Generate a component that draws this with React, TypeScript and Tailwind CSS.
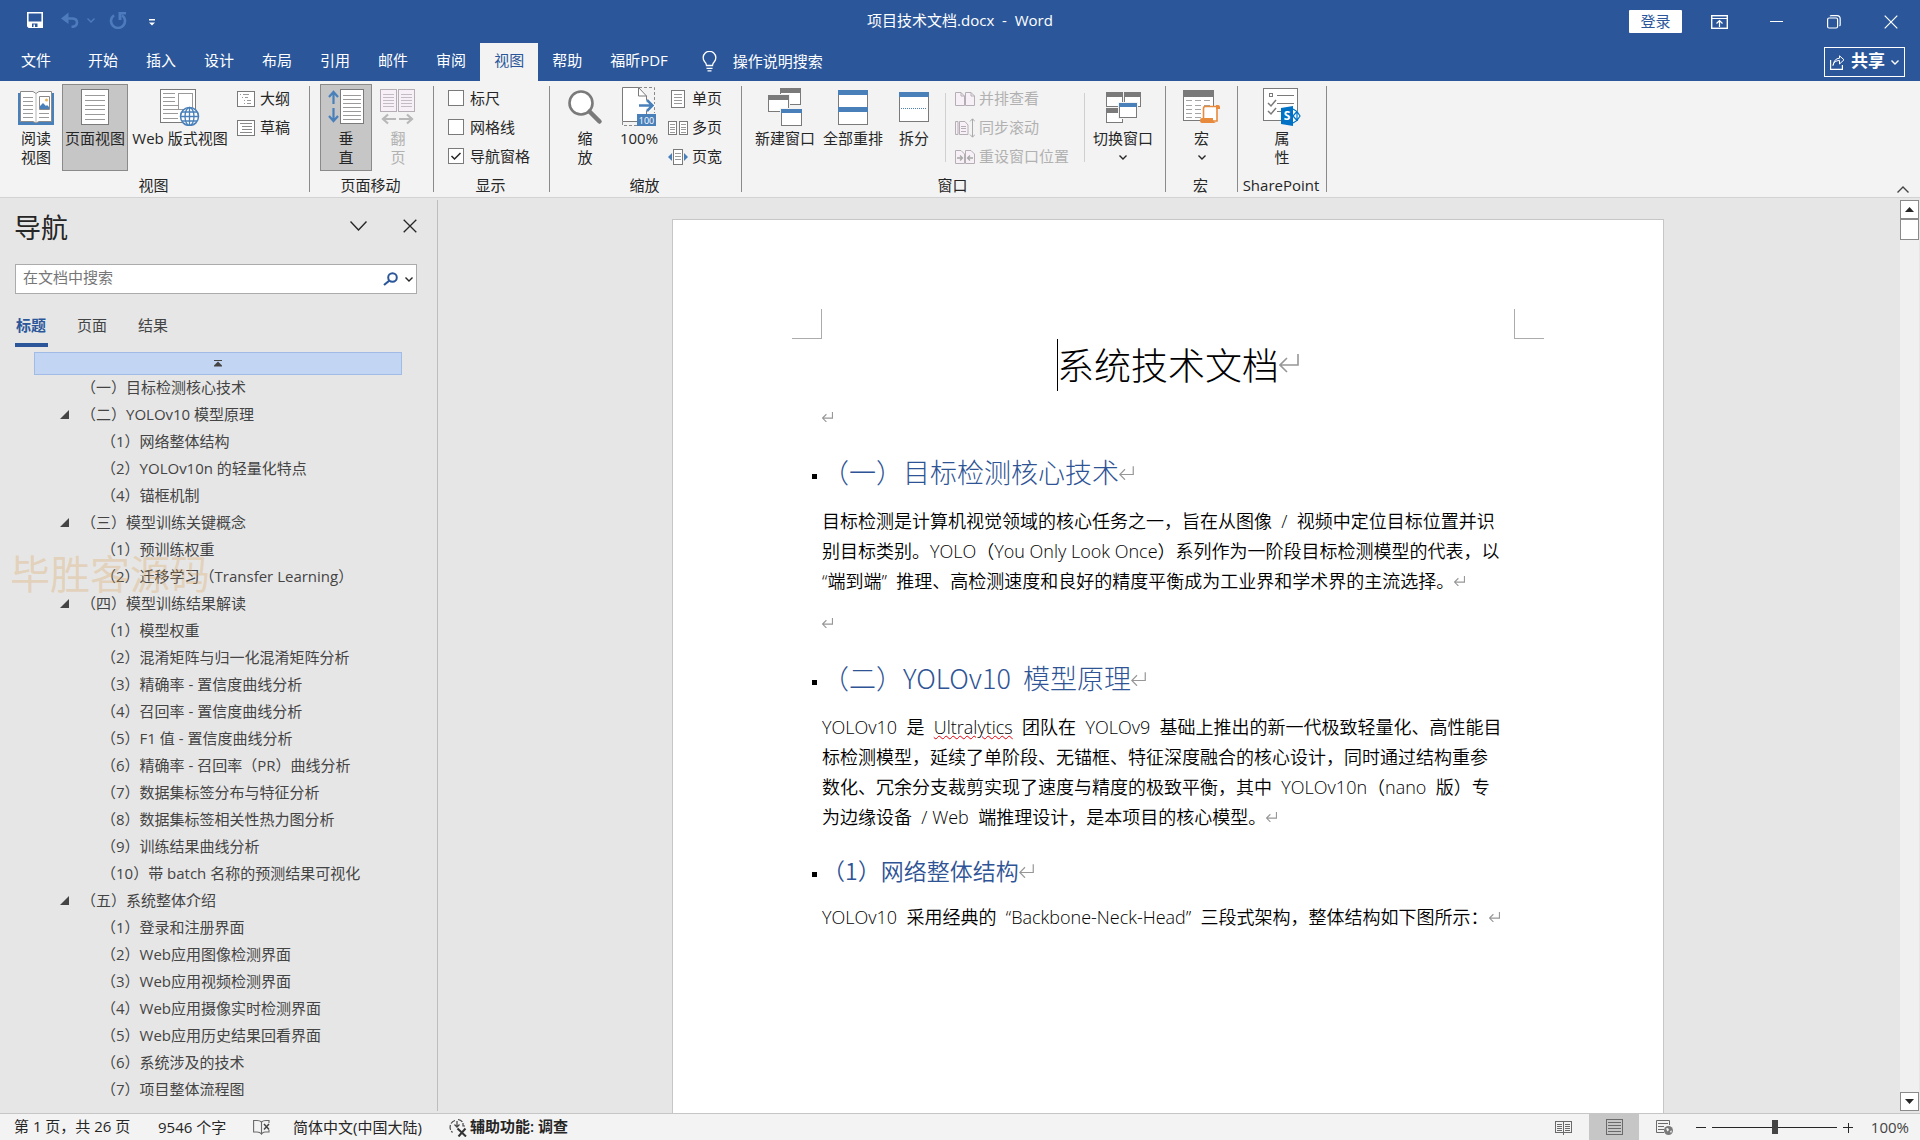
import type { ReactNode } from 'react';

const GREY = '#7a7a7a';
const BLUE = '#4a80ba';

/* ---------- helpers for line-art icons ---------- */

interface IconProps {
  w: number;
  h: number;
  crisp?: boolean;
  children: ReactNode;
}

function Icon({ w, h, crisp, children }: IconProps) {
  return (
    <svg width={w} height={h} viewBox={`0 0 ${w} ${h}`} fill="none" className="shrink-0" shapeRendering={crisp ? 'crispEdges' : 'auto'} aria-hidden="true">
      {children}
    </svg>
  );
}

function Lines({ x1, x2, ys, color = '#8a8a8a' }: { x1: number; x2: number; ys: number[]; color?: string }) {
  return (
    <>
      {ys.map((y) => (
        <path key={y} d={`M${x1} ${y + 0.5}H${x2}`} stroke={color} />
      ))}
    </>
  );
}

function Chevron({ w = 8, color = '#262626', flip = false }: { w?: number; color?: string; flip?: boolean }) {
  const h = Math.round(w / 2) + 1;
  return (
    <Icon w={w} h={h}>
      <path d={flip ? `M.5 ${h - 0.5}L${w / 2} 1L${w - 0.5} ${h - 0.5}` : `M.5 .5L${w / 2} ${h - 1}L${w - 0.5} .5`} stroke={color} strokeWidth="1.4" />
    </Icon>
  );
}

function ReturnMark({ size = 'sm' }: { size?: 'sm' | 'md' | 'lg' }) {
  const cls = {
    sm: 'mb-1 h-[10px] w-[11px]',
    md: 'mb-1.5 h-[14px] w-[15px]',
    lg: 'h-[20px] w-[20px]',
  }[size];
  return (
    <svg viewBox="0 0 20 18" fill="none" stroke="#979797" strokeWidth={size === 'sm' ? 2 : 1.6} className={`inline-block ${cls}`} aria-hidden="true">
      <path d="M19 0V11H2M8 4L1 11L8 18" />
    </svg>
  );
}

/* ---------- ribbon icons ---------- */

const ReadIcon = () => (
  <Icon w={38} h={36}>
    <path d="M1 4H4V33H18L19 34L20 33H34V4H37V36H1Z" fill={BLUE} />
    <path d="M3.500 2.500H16L19 4.500L22 2.500H34.500V32.500H22L19 34L16 32.500H3.500Z" fill="#fff" stroke="#8a8a8a" />
    <path d="M19 4V33" stroke="#b5b5b5" />
    <Lines x1={6} x2={16} ys={[8, 12, 16, 20, 24, 28]} color="#9a9a9a" />
    <Lines x1={22} x2={32} ys={[24, 28]} color="#9a9a9a" />
    <path d="M22.500 7.500H32.500V20.500H22.500Z" fill="#fff" stroke="#8a8a8a" />
    <path d="M23 20V17L26 14L29 17L30 16L32 18V20Z" fill={BLUE} />
    <circle cx="29.500" cy="11" r="1.500" fill="#e8b45c" />
  </Icon>
);

const PageIcon = () => (
  <Icon w={28} h={36} crisp>
    <rect x=".5" y=".5" width="27" height="35" fill="#fff" stroke={GREY} />
    <Lines x1={4} x2={24} ys={[6, 11, 16, 20, 25, 30]} color="#9a9a9a" />
  </Icon>
);

const WebIcon = () => (
  <Icon w={40} h={38}>
    <rect x=".5" y="1.500" width="35" height="33" fill="#fff" stroke={GREY} />
    <Lines x1={3} x2={15} ys={[5, 9, 13]} color="#9a9a9a" />
    <Lines x1={3} x2={18} ys={[17, 21, 25, 30]} color="#9a9a9a" />
    <rect x="18.500" y="5.500" width="14" height="16" fill="#fff" stroke="#9a9a9a" />
    <circle cx="29.500" cy="28.500" r="9" fill="#fff" stroke={BLUE} strokeWidth="1.500" />
    <ellipse cx="29.500" cy="28.500" rx="4.500" ry="9" stroke={BLUE} strokeWidth="1.300" />
    <path d="M29.500 19.500V37.500M20.500 28.500H38.500M22 24H37M22 33H37" stroke={BLUE} strokeWidth="1.300" />
  </Icon>
);

const OutlineIcon = () => (
  <Icon w={18} h={16} crisp>
    <rect x=".5" y=".5" width="17" height="15" fill="#fff" stroke={GREY} />
    <path d="M3 3.500H4M6 3.500H12M5 6.500H6M8 6.500H11M7 9.500H8M10 9.500H14M7 12.500H8M10 12.500H14" stroke="#9a9a9a" />
  </Icon>
);

const DraftIcon = () => (
  <Icon w={18} h={16} crisp>
    <rect x=".5" y=".5" width="17" height="15" fill="#fff" stroke={GREY} />
    <Lines x1={3} x2={15} ys={[3, 12]} color="#8a8a8a" />
    <Lines x1={5} x2={15} ys={[6, 9]} color="#8a8a8a" />
  </Icon>
);

const VerticalIcon = () => (
  <Icon w={36} h={36}>
    <path d="M5.500 3V15M1 8L5.500 3L10 8M5.500 19V32M1 27L5.500 32L10 27" stroke={BLUE} strokeWidth="2.200" />
    <rect x="12.500" y=".5" width="23" height="34" fill="#fff" stroke={GREY} />
    <Lines x1={15} x2={33} ys={[6, 10, 14, 18, 22, 26, 30]} color="#9a9a9a" />
  </Icon>
);

const FlipIcon = () => (
  <Icon w={36} h={36}>
    <rect x=".5" y=".5" width="16" height="22" fill="#f7f1f7" stroke="#b5aeb5" />
    <rect x="18.500" y=".5" width="16" height="22" fill="#f7f1f7" stroke="#b5aeb5" />
    <Lines x1={3} x2={14} ys={[5, 8, 11, 14, 17]} color="#c4bcc4" />
    <Lines x1={21} x2={32} ys={[5, 8, 11, 14, 17]} color="#c4bcc4" />
    <path d="M3 30H16M8 25.500L3 30L8 34.500M19 30H32M27 25.500L32 30L27 34.500" stroke="#b8b8b8" strokeWidth="2.200" />
  </Icon>
);

const ZoomIcon = () => (
  <Icon w={36} h={36}>
    <circle cx="14" cy="14" r="11.500" fill="#fff" stroke={GREY} strokeWidth="2.600" />
    <path d="M22.500 22.500L32.500 32.500" stroke={GREY} strokeWidth="4.500" strokeLinecap="round" />
  </Icon>
);

const HundredIcon = () => (
  <Icon w={34} h={40}>
    <path d="M17 .5H32.500V26M.5 35V38.500H15" stroke="#8a8a8a" strokeDasharray="3 2" />
    <path d="M.5 .5H16.500L24.500 9V34.500H.5Z" fill="#fff" stroke={GREY} />
    <path d="M16.500 .5V9H24.500" stroke={GREY} />
    <path d="M17 18.500H30M25 13L30.500 18.500L25 24" stroke="#fff" strokeWidth="5" />
    <path d="M17 18.500H30M25 13L30.500 18.500L25 24" stroke={BLUE} strokeWidth="2.500" />
    <rect x="15" y="27" width="19" height="12" fill={BLUE} />
    <text x="24.500" y="36.500" textAnchor="middle" fontSize="9" fill="#fff">100</text>
  </Icon>
);

const OnePageIcon = () => (
  <Icon w={14} h={18} crisp>
    <rect x=".5" y=".5" width="13" height="17" fill="#fff" stroke={GREY} />
    <Lines x1={3} x2={11} ys={[4, 7, 10, 13]} color="#9a9a9a" />
  </Icon>
);

const MultiPageIcon = () => (
  <Icon w={20} h={14} crisp>
    <rect x=".5" y=".5" width="8" height="13" fill="#fff" stroke={GREY} />
    <rect x="11.500" y=".5" width="8" height="13" fill="#fff" stroke={GREY} />
    <Lines x1={2} x2={7} ys={[3, 6, 8, 11]} color="#9a9a9a" />
    <Lines x1={13} x2={18} ys={[3, 6, 8, 11]} color="#9a9a9a" />
  </Icon>
);

const PageWidthIcon = () => (
  <Icon w={20} h={16}>
    <rect x="5.500" y=".5" width="9" height="15" fill="#fff" stroke={GREY} />
    <Lines x1={7} x2={13} ys={[4, 7, 10]} color="#9a9a9a" />
    <path d="M0 8L4 4V12ZM20 8L16 4V12Z" fill={BLUE} />
  </Icon>
);

function MiniWindow({ x, y, w, h, color }: { x: number; y: number; w: number; h: number; color: string }) {
  return (
    <>
      <rect x={x - 1} y={y - 1} width={w + 2} height={h + 2} fill="#f3f3f3" />
      <rect x={x + 0.5} y={y + 0.5} width={w - 1} height={h - 1} fill="#fff" stroke={GREY} />
      <rect x={x} y={y} width={w} height={color === BLUE ? 4 : 5} fill={color} />
    </>
  );
}

const NewWindowIcon = () => (
  <Icon w={36} h={38} crisp>
    <MiniWindow x={13} y={0} w={21} h={17} color={GREY} />
    <MiniWindow x={1} y={7} w={21} h={17} color={GREY} />
    <MiniWindow x={14} y={21} w={21} h={17} color={BLUE} />
  </Icon>
);

const ArrangeIcon = () => (
  <Icon w={30} h={35} crisp>
    <rect x=".5" y=".5" width="29" height="34" fill="#fff" stroke={GREY} />
    <rect width="30" height="5" fill={BLUE} />
    <rect y="17" width="30" height="5" fill={BLUE} />
  </Icon>
);

const SplitIcon = () => (
  <Icon w={30} h={30} crisp>
    <rect x=".5" y=".5" width="29" height="29" fill="#fff" stroke={GREY} />
    <rect width="30" height="5" fill={BLUE} />
    <path d="M2 16.500H28" stroke={BLUE} strokeDasharray="1 1" />
  </Icon>
);

const SideBySideIcon = () => (
  <Icon w={20} h={14}>
    <path d="M.5 .5H6L9.500 4V13.500H.5ZM6 .5V4H9.500M10.500 .5H16L19.500 4V13.500H10.500ZM16 .5V4H19.500" fill="#f7f1f7" stroke="#b5aeb5" />
  </Icon>
);

const SyncScrollIcon = () => (
  <Icon w={20} h={20}>
    <path d="M.5 3.500H3V16.500H.5ZM4.500 3.500H10L13 7V16.500H4.500Z" fill="#f7f1f7" stroke="#b5aeb5" />
    <Lines x1={6} x2={11} ys={[8, 10, 13]} color="#b5aeb5" />
    <path d="M17.500 1V19M15 3.500L17.500 .8L20 3.500M15 16.500L17.500 19.200L20 16.500" stroke="#aaa" />
  </Icon>
);

const ResetWindowIcon = () => (
  <Icon w={20} h={14}>
    <path d="M.5 .5H6L9.500 4V13.500H.5ZM10.500 .5H16L19.500 4V13.500H10.500Z" fill="#f7f1f7" stroke="#b5aeb5" />
    <path d="M2 8H7.500M5 5.500L7.500 8L5 10.500M18 8H12.500M15 5.500L12.500 8L15 10.500" stroke="#a8a8a8" strokeWidth="1.300" />
  </Icon>
);

const SwitchIcon = () => (
  <Icon w={35} h={31} crisp>
    <MiniWindow x={0} y={0} w={17} h={15} color={GREY} />
    <MiniWindow x={18} y={0} w={17} h={15} color={GREY} />
    <MiniWindow x={0} y={16} w={17} h={15} color={GREY} />
    <MiniWindow x={13} y={11} w={18} h={15} color={BLUE} />
  </Icon>
);

const MacroIcon = () => (
  <Icon w={37} h={34}>
    <rect x=".5" y=".5" width="30" height="30" fill="#fff" stroke={GREY} />
    <rect width="31" height="7" fill={GREY} />
    {[10, 15, 19, 23, 27].map((y) => (
      <path key={y} d={`M3 ${y + 0.5}H9M12 ${y + 0.5}H18M21 ${y + 0.5}H27`} stroke="#a5a5a5" />
    ))}
    <path d="M22 16.500H34V31H20.500V19Q20.500 16.500 22 16.500Z" fill="#fff" stroke="#e88a3c" strokeWidth="1.600" />
    <path d="M33 15H35Q37 15 37 17V19H33ZM17 30Q17 28 19 28H30V30Q31 33 33 33H19Q17 33 17 31Z" fill="#e88a3c" />
  </Icon>
);

const PropertiesIcon = () => (
  <Icon w={38} h={38}>
    <rect x=".5" y=".5" width="34" height="32" fill="#fff" stroke={GREY} />
    <rect x="6.500" y="5.500" width="3" height="3" stroke={GREY} />
    <path d="M14 7.500H31M14 15.500H31M14 23.500H19" stroke={GREY} />
    <path d="M5 15L8 18L13 12M5 23L8 26L13 20" stroke={GREY} strokeWidth="1.500" />
    <path d="M24 18L32 20L37.500 28L32 35L24 37Z" fill="#fff" />
    <path d="M30 21L34 23.500V32.500L30 35M34 23.500L37 28L34 32.500M30 28L34 23.500M30 28L34 32.500" stroke="#0072c6" strokeWidth="1.200" />
    <path d="M18 20L30 18V38L18 36Z" fill="#0072c6" />
    <text x="24" y="32" textAnchor="middle" fontSize="12" fontWeight="700" fill="#fff">S</text>
  </Icon>
);

/* ---------- ribbon building blocks ---------- */

interface BigButtonProps {
  icon: ReactNode;
  label: string[];
  width: string;
  active?: boolean;
  disabled?: boolean;
  menu?: boolean;
}

function BigButton({ icon, label, width, active, disabled, menu }: BigButtonProps) {
  return (
    <button
      type="button"
      disabled={disabled}
      className={`flex h-[87px] shrink-0 flex-col items-center border pt-0.5 leading-[19px] whitespace-nowrap ${width} ${
        active ? 'border-[#8a8a8a] bg-[#c6c6c6]' : 'border-transparent'
      } ${disabled ? 'text-[#b1b1b1]' : 'text-[#262626]'}`}
    >
      <span className="flex h-[42px] shrink-0 items-center justify-center pb-0.5">{icon}</span>
      {label.map((l) => (
        <span key={l}>{l}</span>
      ))}
      {menu && (
        <span className="flex h-[19px] items-center">
          <Chevron />
        </span>
      )}
    </button>
  );
}

function SmallButton({ icon, label, disabled }: { icon: ReactNode; label: string; disabled?: boolean }) {
  return (
    <button type="button" disabled={disabled} className={`flex h-[29px] items-center gap-1 whitespace-nowrap ${disabled ? 'text-[#b1b1b1]' : 'text-[#262626]'}`}>
      <span className="flex w-5 justify-center">{icon}</span>
      <span className="pb-0.5">{label}</span>
    </button>
  );
}

function Check({ label, checked }: { label: string; checked?: boolean }) {
  return (
    <label className="flex h-[29px] items-center gap-1.5 pb-0.5 whitespace-nowrap">
      <span className="relative flex h-4 w-4">
        <input type="checkbox" defaultChecked={checked} className="peer h-4 w-4 appearance-none border border-[#7a7a7a] bg-white" />
        <svg viewBox="0 0 16 16" fill="none" stroke="#262626" strokeWidth="1.5" className="pointer-events-none absolute inset-0 hidden peer-checked:block" aria-hidden="true">
          <path d="M3.500 8L6.500 11L12.500 5" />
        </svg>
      </span>
      {label}
    </label>
  );
}

function Group({ title, width, children }: { title: string; width: string; children: ReactNode }) {
  return (
    <>
      <section aria-label={title} className={`flex shrink-0 flex-col pt-[3px] ${width}`}>
        <div className="flex h-[87px]">{children}</div>
        <div className="mt-1 mr-0.5 text-center leading-5">{title}</div>
      </section>
      <div className="my-[5px] w-px shrink-0 bg-[#8a8a8a]" />
    </>
  );
}

function TitleBar() {
  return (
    <header className="grid h-[43px] grid-cols-[1fr_auto_1fr] items-start text-white">
      <div className="flex h-10 items-center pl-[27px]">
        <button type="button" aria-label="保存">
          <Icon w={16} h={16}>
            <path d="M.8 .8H15.200V15.200H2L.8 14Z" stroke="#fff" strokeWidth="1.600" />
            <path d="M.8 9.500H15.200V15.200H.8Z" fill="#fff" />
            <path d="M5 11.500H10.500V15H5Z" fill="#2b579a" />
            <path d="M6.500 12.500H8V15H6.500Z" fill="#fff" />
          </Icon>
        </button>
        <button type="button" disabled aria-label="撤消" className="ml-[18px] flex items-center gap-2">
          <Icon w={18} h={16}>
            <path d="M2 6.500H11Q16 6.500 16 10.500T10.500 15" stroke="#4d7bbb" strokeWidth="2.600" />
            <path d="M0 6.500L7.500 .5V12Z" fill="#4d7bbb" />
          </Icon>
          <Chevron w={8} color="#4d7bbb" />
        </button>
        <button type="button" disabled aria-label="重复" className="ml-[14px]">
          <Icon w={18} h={17}>
            <path d="M5 3.200A7 7 0 1 0 13 3.200" stroke="#4d7bbb" strokeWidth="2.600" />
            <path d="M9.500 0H17V2.500H12.500V8H9.500Z" fill="#4d7bbb" />
          </Icon>
        </button>
        <button type="button" aria-label="自定义快速访问工具栏" className="ml-[22px] pt-1">
          <Icon w={6} h={7}>
            <path d="M0 0H6V1.500H0ZM0 3.500H6L3 6.500Z" fill="#fff" />
          </Icon>
        </button>
      </div>
      <h1 className="leading-10 whitespace-pre">项目技术文档.docx  -  Word</h1>
      <div className="flex h-[43px] items-center justify-end">
        <button type="button" className="h-[23px] w-[53px] rounded-[1px] bg-white pb-px leading-[21px] text-[#2b579a]">
          登录
        </button>
        <div className="flex h-[38px] items-center pr-[22px] pl-[29px]">
          <button type="button" aria-label="功能区显示选项">
            <Icon w={17} h={14}>
              <rect x=".7" y=".7" width="15.600" height="12.600" stroke="#fff" strokeWidth="1.400" />
              <path d="M0 3.500H17M8.500 12V6M5.500 8.500L8.500 5.500L11.500 8.500" stroke="#fff" strokeWidth="1.200" />
            </Icon>
          </button>
          <button type="button" aria-label="最小化" className="ml-[42px]">
            <Icon w={13} h={14} crisp>
              <path d="M0 6.500H13" stroke="#fff" />
            </Icon>
          </button>
          <button type="button" aria-label="还原" className="ml-11">
            <Icon w={14} h={14}>
              <rect x=".6" y="3" width="10" height="10" rx="1.500" stroke="#fff" strokeWidth="1.200" />
              <path d="M3 1Q3.500 .6 4.500 .6H10Q13.200 .6 13.200 4V9.500Q13.200 10.500 12.500 11" stroke="#fff" strokeWidth="1.200" />
            </Icon>
          </button>
          <button type="button" aria-label="关闭" className="ml-[43px]">
            <Icon w={14} h={14}>
              <path d="M.7 .7L13.300 13.300M13.300 .7L.7 13.300" stroke="#fff" strokeWidth="1.200" />
            </Icon>
          </button>
        </div>
      </div>
    </header>
  );
}

const tabs = ['开始', '插入', '设计', '布局', '引用', '邮件', '审阅', '视图', '帮助', '福昕PDF'];

function TabBar() {
  return (
    <nav className="flex h-[38px] items-stretch text-white">
      <button type="button" className="pr-[23px] pb-1 pl-[21px]">文件</button>
      {tabs.map((t) => (
        <button key={t} type="button" className={`px-3.5 pb-1 whitespace-nowrap ${t === '视图' ? 'bg-[#f3f3f3] text-[#2b579a]' : ''}`}>
          {t}
        </button>
      ))}
      <button type="button" className="ml-5 flex items-center gap-4 pb-0.5 whitespace-nowrap">
        <Icon w={15} h={21}>
          <path d="M4.500 14.500Q4.500 12.500 2.500 10.500A6.300 6.300 0 1 1 12.500 10.500Q10.500 12.500 10.500 14.500Z" stroke="#fff" strokeWidth="1.300" />
          <path d="M4.500 17.300H10.500M5.500 19.800H9.500" stroke="#fff" strokeWidth="1.300" />
        </Icon>
        操作说明搜索
      </button>
      <button type="button" className="mt-1 mr-[15px] ml-auto flex h-[30px] w-[81px] items-center justify-between border border-white px-[5px] text-[17px] font-bold">
        <Icon w={15} h={15}>
          <path d="M.6 5V14.400H12.400V10" stroke="#fff" strokeWidth="1.200" />
          <path d="M3 10.500Q4 5.500 9.500 5.500V9L14 4.800L9.500 .8V3.200Q4 3.500 3 10.500Z" stroke="#fff" />
        </Icon>
        <span className="pb-0.5">共享</span>
        <Chevron color="#fff" />
      </button>
    </nav>
  );
}

function Ribbon() {
  return (
    <div className="flex h-[117px] border-b border-[#d2d2d2] bg-[#f3f3f3] text-[#262626]">
      <Group title="视图" width="w-[309px]">
        <div className="flex gap-1 pl-3.5">
          <BigButton icon={<ReadIcon />} label={['阅读', '视图']} width="w-11" />
          <BigButton icon={<PageIcon />} label={['页面视图']} width="w-[66px]" active />
          <BigButton icon={<WebIcon />} label={['Web 版式视图']} width="w-24" />
          <div className="flex flex-col pl-1">
            <SmallButton icon={<OutlineIcon />} label="大纲" />
            <SmallButton icon={<DraftIcon />} label="草稿" />
          </div>
        </div>
      </Group>
      <Group title="页面移动" width="w-[123px]">
        <div className="flex pl-2.5">
          <BigButton icon={<VerticalIcon />} label={['垂', '直']} width="w-[52px]" active />
          <BigButton icon={<FlipIcon />} label={['翻', '页']} width="w-[52px]" disabled />
        </div>
      </Group>
      <Group title="显示" width="w-[115px]">
        <div className="flex flex-col pl-3.5">
          <Check label="标尺" />
          <Check label="网格线" />
          <Check label="导航窗格" checked />
        </div>
      </Group>
      <Group title="缩放" width="w-[191px]">
        <div className="flex pl-2">
          <BigButton icon={<ZoomIcon />} label={['缩', '放']} width="w-[54px]" />
          <BigButton icon={<HundredIcon />} label={['100%']} width="w-[54px]" />
          <div className="flex flex-col pl-0.5">
            <SmallButton icon={<OnePageIcon />} label="单页" />
            <SmallButton icon={<MultiPageIcon />} label="多页" />
            <SmallButton icon={<PageWidthIcon />} label="页宽" />
          </div>
        </div>
      </Group>
      <Group title="窗口" width="w-[423px]">
        <div className="flex pl-[9px]">
          <BigButton icon={<NewWindowIcon />} label={['新建窗口']} width="w-[68px]" />
          <BigButton icon={<ArrangeIcon />} label={['全部重排']} width="w-[68px]" />
          <BigButton icon={<SplitIcon />} label={['拆分']} width="w-[54px]" />
          <div className="my-[9px] ml-1 w-px bg-[#d0d0d0]" />
          <div className="flex w-[138px] flex-col pl-[9px]">
            <SmallButton icon={<SideBySideIcon />} label="并排查看" disabled />
            <SmallButton icon={<SyncScrollIcon />} label="同步滚动" disabled />
            <SmallButton icon={<ResetWindowIcon />} label="重设窗口位置" disabled />
          </div>
          <div className="my-[9px] mr-1 w-px bg-[#d0d0d0]" />
          <BigButton icon={<SwitchIcon />} label={['切换窗口']} width="w-[68px]" menu />
        </div>
      </Group>
      <Group title="宏" width="w-[71px]">
        <BigButton icon={<MacroIcon />} label={['宏']} width="w-[71px]" menu />
      </Group>
      <Group title="SharePoint" width="w-[88px]">
        <BigButton icon={<PropertiesIcon />} label={['属', '性']} width="w-[88px]" />
      </Group>
      <button type="button" aria-label="折叠功能区" className="mr-[11px] mb-1 ml-auto self-end">
        <Chevron w={12} color="#444" flip />
      </button>
    </div>
  );
}

/* ---------- navigation pane ---------- */

interface Heading {
  level: 1 | 2;
  text: string;
  open?: boolean;
}

const headings: Heading[] = [
  { level: 1, text: '（一）目标检测核心技术' },
  { level: 1, text: '（二）YOLOv10 模型原理', open: true },
  { level: 2, text: '（1）网络整体结构' },
  { level: 2, text: '（2）YOLOv10n 的轻量化特点' },
  { level: 2, text: '（4）锚框机制' },
  { level: 1, text: '（三）模型训练关键概念', open: true },
  { level: 2, text: '（1）预训练权重' },
  { level: 2, text: '（2）迁移学习（Transfer Learning）' },
  { level: 1, text: '（四）模型训练结果解读', open: true },
  { level: 2, text: '（1）模型权重' },
  { level: 2, text: '（2）混淆矩阵与归一化混淆矩阵分析' },
  { level: 2, text: '（3）精确率 - 置信度曲线分析' },
  { level: 2, text: '（4）召回率 - 置信度曲线分析' },
  { level: 2, text: '（5）F1 值 - 置信度曲线分析' },
  { level: 2, text: '（6）精确率 - 召回率（PR）曲线分析' },
  { level: 2, text: '（7）数据集标签分布与特征分析' },
  { level: 2, text: '（8）数据集标签相关性热力图分析' },
  { level: 2, text: '（9）训练结果曲线分析' },
  { level: 2, text: '（10）带 batch 名称的预测结果可视化' },
  { level: 1, text: '（五）系统整体介绍', open: true },
  { level: 2, text: '（1）登录和注册界面' },
  { level: 2, text: '（2）Web应用图像检测界面' },
  { level: 2, text: '（3）Web应用视频检测界面' },
  { level: 2, text: '（4）Web应用摄像实时检测界面' },
  { level: 2, text: '（5）Web应用历史结果回看界面' },
  { level: 2, text: '（6）系统涉及的技术' },
  { level: 2, text: '（7）项目整体流程图' },
];

function NavPane() {
  return (
    <aside className="relative my-0.5 flex w-[438px] shrink-0 flex-col border-r border-[#bdbdbd] pb-[15px] text-[#444]">
      <div className="flex h-14 items-center pr-5 pl-[14px]">
        <h2 className="text-[27px] leading-10 text-[#262626]">导航</h2>
        <button type="button" aria-label="任务窗格选项" className="mr-9 mb-1 ml-auto">
          <Chevron w={17} />
        </button>
        <button type="button" aria-label="关闭" className="mb-1">
          <Icon w={14} h={14}>
            <path d="M.7 .7L13.300 13.300M13.300 .7L.7 13.300" stroke="#262626" strokeWidth="1.300" />
          </Icon>
        </button>
      </div>
      <div className="mt-2 mr-5 ml-[15px] flex h-[30px] shrink-0 items-center border border-[#ababab] bg-white pr-[3px]">
        <input type="text" aria-label="在文档中搜索" placeholder="在文档中搜索" className="h-full min-w-0 flex-1 pb-1 pl-[7px] outline-none placeholder:text-[#767676]" />
        <button type="button" aria-label="搜索" className="mr-[7px]">
          <Icon w={15} h={14}>
            <circle cx="9.500" cy="5.500" r="4.300" stroke="#2b579a" strokeWidth="2" />
            <path d="M6.500 8.500L1 13" stroke="#2b579a" strokeWidth="2.200" />
          </Icon>
        </button>
        <button type="button" aria-label="搜索选项">
          <Chevron />
        </button>
      </div>
      <div role="tablist" className="mt-3 flex h-[41px] shrink-0 gap-[29px] pl-[15px]">
        <button type="button" role="tab" aria-selected="true" className="w-[33px] border-b-4 border-[#2b579a] pl-px text-left font-bold text-[#2b579a]">标题</button>
        <button type="button" role="tab" aria-selected="false" className="w-8 border-b-4 border-transparent text-left">页面</button>
        <button type="button" role="tab" aria-selected="false" className="w-8 border-b-4 border-transparent text-left">结果</button>
      </div>
      <button type="button" aria-label="跳转到开头" className="mt-[5px] mr-[35px] ml-[34px] flex h-[23px] shrink-0 items-center justify-center border border-[#9fbbe6] bg-[#c2d5f2]">
        <Icon w={8} h={7}>
          <path d="M0 0H8V1H0ZM4 1.500L8 5.500V6.500H0V5.500Z" fill="#444" />
        </Icon>
      </button>
      <ul className="min-h-0 flex-1 overflow-hidden">
        {headings.map((h, i) => (
          <li key={i} className={`flex h-[27px] items-center pb-1 whitespace-nowrap ${h.level === 1 ? 'pl-[60px]' : 'pl-[101px]'}`}>
            {h.level === 1 && (
              <span className="w-[21px] pt-0.5">
                {h.open && (
                  <Icon w={9} h={9}>
                    <path d="M9 0V9H0Z" fill="#444" />
                  </Icon>
                )}
              </span>
            )}
            {h.text}
          </li>
        ))}
      </ul>
      <div className="pointer-events-none absolute top-[346px] left-[10px] text-[40px] leading-[56px] text-[#dca050]/30">毕胜客源码</div>
    </aside>
  );
}

/* ---------- document ---------- */

function SectionHeading({ text, small }: { text: string; small?: boolean }) {
  return (
    <h3
      className={`relative mt-5 mb-3.5 font-['Noto_Sans_CJK_SC',sans-serif] whitespace-pre text-[#2f5496] ${
        small ? 'text-[23px] leading-[36px] font-[350]' : 'text-[27px] leading-[40px] font-light'
      }`}
    >
      <span className="absolute top-1/2 -left-[10px] mt-0.5 h-[5px] w-[5px] bg-black" />
      {text}
      <ReturnMark size="md" />
    </h3>
  );
}

function Paragraph({ lines }: { lines: ReactNode[] }) {
  return (
    <p className="mb-3 text-[18px] leading-[30px] font-[350] whitespace-pre text-black">
      {lines.map((l, i) => (
        <span key={i} className="block h-[30px]">
          {l}
          {i === lines.length - 1 && <ReturnMark />}
        </span>
      ))}
    </p>
  );
}

function Page() {
  return (
    <article className="relative mt-[21px] w-[992px] shrink-0 border border-b-0 border-[#c6c6c6] bg-white px-[149px] pt-[119px]">
      <span className="absolute top-[89px] left-[119px] h-[30px] w-[30px] border-r border-b border-[#ababab]" />
      <span className="absolute top-[89px] right-[119px] h-[30px] w-[30px] border-b border-l border-[#ababab]" />
      <h2 className="mb-[13px] flex justify-center font-['Noto_Sans_CJK_SC',sans-serif] text-[37px] leading-[50px] font-light text-black">
        <span className="relative">
          <span className="absolute top-0 left-0 h-[52px] w-px bg-black" />
          系统技术文档
          <span className="absolute top-[14px] left-full flex">
            <ReturnMark size="lg" />
          </span>
        </span>
      </h2>
      <Paragraph lines={['']} />
      <SectionHeading text="（一）目标检测核心技术" />
      <Paragraph
        lines={[
          '目标检测是计算机视觉领域的核心任务之一，旨在从图像  /  视频中定位目标位置并识',
          '别目标类别。YOLO（You Only Look Once）系列作为一阶段目标检测模型的代表，以',
          '“端到端”  推理、高检测速度和良好的精度平衡成为工业界和学术界的主流选择。',
        ]}
      />
      <Paragraph lines={['']} />
      <SectionHeading text="（二）YOLOv10  模型原理" />
      <Paragraph
        lines={[
          <>
            YOLOv10  是  <span className="underline decoration-red-600 decoration-wavy decoration-1">Ultralytics</span>  团队在  YOLOv9  基础上推出的新一代极致轻量化、高性能目
          </>,
          '标检测模型，延续了单阶段、无锚框、特征深度融合的核心设计，同时通过结构重参',
          '数化、冗余分支裁剪实现了速度与精度的极致平衡，其中  YOLOv10n（nano  版）专',
          '为边缘设备  / Web  端推理设计，是本项目的核心模型。',
        ]}
      />
      <SectionHeading text="（1）网络整体结构" small />
      <Paragraph lines={['YOLOv10  采用经典的  “Backbone-Neck-Head”  三段式架构，整体结构如下图所示：']} />
    </article>
  );
}

function ScrollBar() {
  return (
    <div className="mt-0.5 mr-px mb-0.5 flex w-[19px] shrink-0 flex-col bg-[#f0f0f0]">
      <button type="button" aria-label="向上滚动" className="flex h-[19px] items-center justify-center border border-[#8a8a8a] bg-white">
        <Icon w={9} h={5}>
          <path d="M4.500 0L9 5H0Z" fill="#262626" />
        </Icon>
      </button>
      <div className="h-[21px] border border-[#8a8a8a] bg-white" />
      <button type="button" aria-label="向下滚动" className="mt-auto flex h-[19px] items-center justify-center border border-[#8a8a8a] bg-white">
        <Icon w={9} h={5}>
          <path d="M4.500 5L9 0H0Z" fill="#262626" />
        </Icon>
      </button>
    </div>
  );
}

function StatusBar() {
  return (
    <footer className="flex h-[27px] shrink-0 items-center border-t border-[#c6c6c6] bg-[#f3f3f3] pr-[11px] pl-[14px] whitespace-nowrap text-[#262626]">
      <span className="w-36 pb-0.5">第 1 页，共 26 页</span>
      <span className="w-[95px]">9546 个字</span>
      <Icon w={17} h={16}>
        <path d="M8.500 3Q7 1.500 4 1.500H.6V13H4Q7 13 8.500 15ZM8.500 3Q10 1.500 13 1.500H16V4M8.500 15Q10 13 12 13H16V11" stroke="#6a6a6a" strokeWidth="1.100" />
        <path d="M11 5L16 10.500M16 5L11 10.500" stroke="#444" strokeWidth="1.500" />
      </Icon>
      <span className="ml-[23px] w-[155px]">简体中文(中国大陆)</span>
      <Icon w={20} h={19}>
        <path d="M7 2.500A7 7 0 0 0 4.500 14.500M10 1.500A7 7 0 0 1 14.500 4" stroke="#444" strokeWidth="1.200" strokeDasharray="5 1.500" />
        <path d="M9 3V9M6.500 6.500L9 9.200L11.500 6.500M15 5V8L17 8" stroke="#444" strokeWidth="1.200" />
        <path d="M9.500 10.500L18 18.500M17.500 10.500L10.500 18.500" stroke="#333" strokeWidth="2" />
      </Icon>
      <span className="ml-0.5 pb-0.5 font-semibold">辅助功能: 调查</span>
      <div className="ml-auto flex h-full items-center">
        <button type="button" aria-label="阅读视图" className="mr-[17px]">
          <Icon w={17} h={15} crisp>
            <path d="M.5 1.500H7.500L8.500 2.500L9.500 1.500H16.500V12.500H9.500L8.500 13.500L7.500 12.500H.5ZM8.500 1V15" stroke="#6a6a6a" />
            <Lines x1={2} x2={7} ys={[4, 6, 8, 10]} color="#6a6a6a" />
            <Lines x1={10} x2={15} ys={[4, 6, 8, 10]} color="#6a6a6a" />
          </Icon>
        </button>
        <button type="button" aria-label="页面视图" className="flex h-full w-[50px] items-center justify-center bg-[#c6c6c6]">
          <Icon w={17} h={16} crisp>
            <rect x=".5" y=".5" width="16" height="15" stroke="#6a6a6a" />
            <Lines x1={2} x2={15} ys={[3, 6, 9, 12]} color="#6a6a6a" />
          </Icon>
        </button>
        <button type="button" aria-label="Web 版式视图" className="mr-[23px] ml-[17px]">
          <Icon w={17} h={16}>
            <path d="M8 13.500H.5V1.500H13.500V6" stroke="#6a6a6a" />
            <Lines x1={2} x2={12} ys={[4]} color="#6a6a6a" />
            <Lines x1={2} x2={8} ys={[7, 10]} color="#6a6a6a" />
            <circle cx="12.500" cy="11.500" r="4.500" fill="#7a7a7a" />
            <path d="M10 9.500L12 9L13 11L11.500 12.500ZM14 12L16 11.500L15 14.500Z" fill="#f3f3f3" />
          </Icon>
        </button>
        <button type="button" aria-label="缩小">
          <Icon w={10} h={11} crisp>
            <path d="M0 5.500H10" stroke="#262626" />
          </Icon>
        </button>
        <input
          type="range"
          aria-label="显示比例"
          min={10}
          max={190}
          defaultValue={100}
          className="mx-1.5 h-3.5 w-[125px] appearance-none bg-[linear-gradient(#262626,#262626)] bg-[length:100%_1px] bg-center bg-no-repeat [&::-webkit-slider-thumb]:h-3.5 [&::-webkit-slider-thumb]:w-1.5 [&::-webkit-slider-thumb]:appearance-none [&::-webkit-slider-thumb]:bg-[#444]"
        />
        <button type="button" aria-label="放大">
          <Icon w={10} h={11} crisp>
            <path d="M0 5.500H10M5.500 1V11" stroke="#262626" />
          </Icon>
        </button>
        <span className="w-14 text-right text-[#444]">100%</span>
      </div>
    </footer>
  );
}

export default function App() {
  return (
    <div className="flex h-screen flex-col overflow-hidden bg-[#e6e6e6] font-['Open_Sans','Noto_Sans_CJK_SC',sans-serif] text-[15px] leading-5" lang="zh-CN">
      <div className="shrink-0 bg-[#2b579a]">
        <TitleBar />
        <TabBar />
        <Ribbon />
      </div>
      <div className="flex min-h-0 flex-1">
        <NavPane />
        <main className="flex min-w-0 flex-1 items-stretch justify-center overflow-hidden pr-0.5">
          <Page />
        </main>
        <ScrollBar />
      </div>
      <StatusBar />
    </div>
  );
}
